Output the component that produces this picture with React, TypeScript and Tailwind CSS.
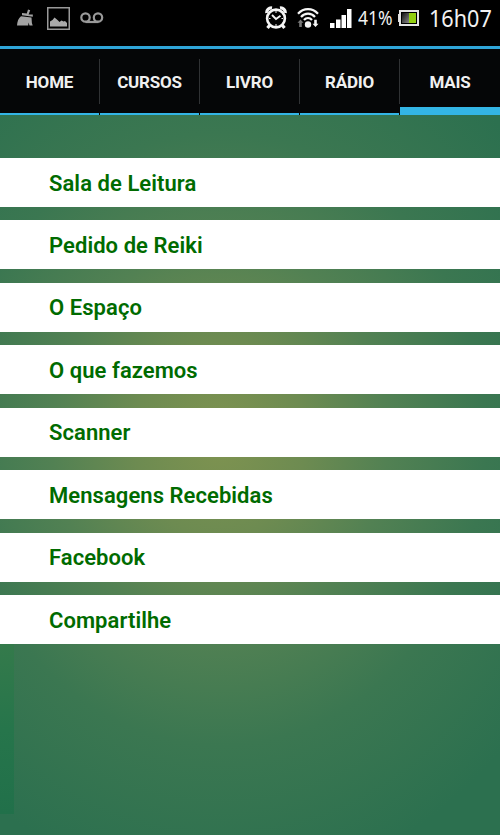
import React, { useState } from "react";
import clsx from "clsx";

const tabs = ["HOME", "CURSOS", "LIVRO", "RÁDIO", "MAIS"];

const items = [
  "Sala de Leitura",
  "Pedido de Reiki",
  "O Espaço",
  "O que fazemos",
  "Scanner",
  "Mensagens Recebidas",
  "Facebook",
  "Compartilhe",
];

function BroomIcon() {
  return (
    <svg width="18" height="18" viewBox="0 0 18 18" className="ml-4" fill="#a3a3a3">
      <path d="M12 .5l2.200.8-1.600 4.100 4.200.2v2.200L6 6.300V4l4.800.5z" />
      <path d="M5 7.200l10.500 1.300.4 5.500.8 2.500H13.500l-1-3-.3 3H1c.2-4 1.500-7.500 4-9.300z" />
    </svg>
  );
}

function PictureIcon() {
  return (
    <svg width="23" height="23" viewBox="0 0 23 23" className="ml-[13px]">
      <rect x=".75" y=".75" width="21.5" height="21.5" fill="none" stroke="#999" strokeWidth="1.5" />
      <path d="M3 19.500v-5l2.500-1.500 2-2.500 3 2.500 2 2 2-1.500 2 1 1.500-.5 2 2v3.500z" fill="#aaa" />
    </svg>
  );
}

function VoicemailIcon() {
  return (
    <svg width="24" height="12" viewBox="0 0 24 12" className="ml-[10px]" fill="none" stroke="#999" strokeWidth="2.200">
      <circle cx="5.500" cy="5.500" r="4.200" />
      <circle cx="18" cy="5.500" r="4.200" />
      <path d="M5.500 10h13" />
    </svg>
  );
}

function AlarmIcon() {
  return (
    <svg width="22" height="24" viewBox="0 0 22 24" fill="none" stroke="#f5f5f5">
      <circle cx="11" cy="12.500" r="8.900" strokeWidth="2.600" />
      <path d="M1.800 7a4.500 4.500 0 0 1 5.200-5M20.200 7a4.500 4.500 0 0 0-5.200-5" strokeWidth="3.200" />
      <path d="M4.500 19.500L2.500 22M17.500 19.500l2 2.500" strokeWidth="3.200" />
      <path d="M7 9l4 4 4.500-3.300" strokeWidth="1.800" />
      <path d="M11 5v2M11 18v2M4 12.500h1.500M16.500 12.500H18" strokeWidth="1" />
    </svg>
  );
}

function WifiIcon() {
  return (
    <svg width="22" height="20" viewBox="0 0 22 20" className="ml-[10px]" fill="none" stroke="#f5f5f5" strokeWidth="2.200">
      <path d="M1 5.800C6.500-.4 15.500-.4 21 5.800" />
      <path d="M4 9c3.900-4.400 10.100-4.400 14 0" />
      <path d="M7 12c2.200-2.700 5.800-2.700 8 0" />
      <circle cx="11" cy="16.500" r="3.200" fill="#f5f5f5" stroke="none" />
      <path d="M3.500 11.500l3 3.300H4.800V19H2.200v-4.200H.5z" fill="#777" stroke="none" />
      <path d="M18.500 19l-3-3.300h1.700v-3.900h2.600v3.900h1.700z" fill="#f5f5f5" stroke="none" />
    </svg>
  );
}

function SignalIcon() {
  return (
    <svg width="22" height="19" viewBox="0 0 22 19" className="ml-[11px]" fill="#fff">
      <path d="M0 14h4.500v5H0zM6 10.500h4.500V19H6zM11.500 6H16v13h-4.500zM17 0h4.500v19H17z" />
    </svg>
  );
}

function BatteryIcon() {
  return (
    <svg width="21" height="16" viewBox="0 0 21 16" className="ml-[5px]">
      <defs>
        <linearGradient id="drained" x1="0" y1="0" x2="1" y2="1">
          <stop offset="0" stopColor="#111" />
          <stop offset="1" stopColor="#888" />
        </linearGradient>
      </defs>
      <path d="M0 4h2v8H0z" fill="#ddd" />
      <rect x="2" y="1" width="18" height="14" fill="#000" stroke="#e5e5e5" strokeWidth="2" />
      <rect x="4" y="3" width="7" height="10" fill="url(#drained)" />
      <rect x="11" y="3" width="7" height="10" fill="#92cf10" />
    </svg>
  );
}

function StatusBar() {
  return (
    <div className="flex h-[46px] items-start bg-black font-['Noto_Sans',sans-serif] text-[#f2f2f2]">
      <div className="flex h-9 items-center">
        <BroomIcon />
        <PictureIcon />
        <VoicemailIcon />
      </div>
      <div className="ml-auto flex h-9 items-center pr-[9px]">
        <AlarmIcon />
        <WifiIcon />
        <SignalIcon />
        <span className="ml-[6px] w-[35px] origin-left scale-x-[0.92] text-[19px] leading-9">41%</span>
        <BatteryIcon />
        <span className="ml-[10px] w-[62px] origin-left scale-x-[0.9] text-2xl leading-9">16h07</span>
      </div>
    </div>
  );
}

export default function App() {
  const [active, setActive] = useState("MAIS");

  return (
    <div className="flex h-[837px] w-[500px] flex-col overflow-hidden bg-white font-[Roboto,sans-serif]">
      <StatusBar />

      <nav className="grid h-[69px] grid-cols-5 border-t-[3px] border-[#2fa5d8] bg-[#050607]">
        {tabs.map((tab, i) => (
          <button
            key={tab}
            onClick={() => setActive(tab)}
            className="flex flex-col text-[17px] font-bold tracking-[-0.2px] text-[#f0f0f0]"
          >
            <span
              className={clsx(
                "mt-[10px] flex h-[45px] w-full items-center justify-center pt-0.5",
                i < tabs.length - 1 && "border-r border-[#303234]"
              )}
            >
              {tab}
            </span>
            <span
              className={clsx(
                "mt-auto bg-[#33b5e5]",
                active === tab ? "h-2 w-full" : "h-0.5 w-[99px]"
              )}
            />
          </button>
        ))}
      </nav>

      <main className="flex h-[720px] flex-col bg-[radial-gradient(ellipse_390px_450px_at_44%_45%,#7f9350_0%,#6d8b51_22%,#528153_43%,#3b7751_68%,#2c704f_100%)] pt-[43px]">
        <ul className="flex flex-col gap-[13.45px]">
          {items.map((item) => (
            <li
              key={item}
              className="flex h-[49px] items-center bg-white pt-px pl-[49px] text-[22px] font-semibold tracking-[0.06px] text-[#006b00]"
            >
              {item}
            </li>
          ))}
        </ul>
        {/* darker strip along the left edge */}
        <div className="mb-[21px] w-3.5 flex-1 bg-linear-to-b from-[#347a4b] via-[#26754b] to-[#21704a]" />
      </main>
    </div>
  );
}
